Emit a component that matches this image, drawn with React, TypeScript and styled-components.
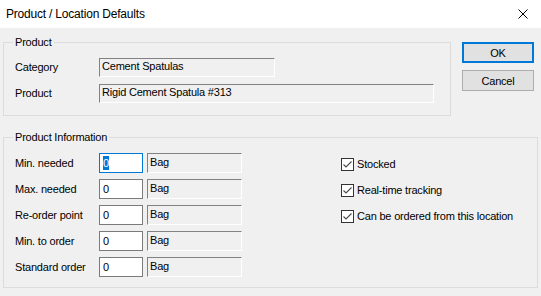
import React from "react";
import styled, { createGlobalStyle } from "styled-components";

const GlobalStyle = createGlobalStyle`
  html, body {
    margin: 0;
    padding: 0;
    background: #f0f0f0;
  }
  body {
    font-family: "Liberation Sans", Arial, sans-serif;
    font-size: 11px;
    letter-spacing: -0.2px;
    color: #000;
  }
`;

const infoRows = [
  { label: "Min. needed", value: "0", unit: "Bag", focused: true },
  { label: "Max. needed", value: "0", unit: "Bag" },
  { label: "Re-order point", value: "0", unit: "Bag" },
  { label: "Min. to order", value: "0", unit: "Bag" },
  { label: "Standard order", value: "0", unit: "Bag" },
];

const options = ["Stocked", "Real-time tracking", "Can be ordered from this location"];

const CheckMark = () => (
  <svg width="11" height="11" viewBox="0 0 11 11">
    <polyline points="1.5,5.5 4,8 9.5,2.5" fill="none" stroke="#4a4a4a" strokeWidth="1.1" />
  </svg>
);

const App: React.FC = () => {
  return (
    <Window>
      <GlobalStyle />
      <TitleBar>
        <Title>Product / Location Defaults</Title>
        <CloseButton>
          <svg width="10" height="10" viewBox="0 0 10 10">
            <path d="M0.5 0.5 L9.5 9.5 M9.5 0.5 L0.5 9.5" stroke="#000" strokeWidth="1" />
          </svg>
        </CloseButton>
      </TitleBar>

      <Body>
        <TopRow>
          <Group $width={448}>
            <Legend>Product</Legend>
            <FieldRows>
              <FieldRow>
                <FieldLabel>Category</FieldLabel>
                <StaticField $width={176}>Cement Spatulas</StaticField>
              </FieldRow>
              <FieldRow>
                <FieldLabel>Product</FieldLabel>
                <StaticField $width={335}>Rigid Cement Spatula #313</StaticField>
              </FieldRow>
            </FieldRows>
          </Group>

          <Buttons>
            <Button $primary>OK</Button>
            <Button>Cancel</Button>
          </Buttons>
        </TopRow>

        <InfoGroup>
          <Legend>Product Information</Legend>
          <InfoContent>
            <InfoGrid>
              {infoRows.map((row) => (
                <React.Fragment key={row.label}>
                  <FieldLabel>{row.label}</FieldLabel>
                  <TextBox $focused={row.focused}>
                    {row.focused ? <Selected>{row.value}</Selected> : row.value}
                  </TextBox>
                  <UnitField $width={95}>{row.unit}</UnitField>
                </React.Fragment>
              ))}
            </InfoGrid>

            <Options>
              {options.map((text) => (
                <OptionRow key={text}>
                  <CheckBox>
                    <CheckMark />
                  </CheckBox>
                  {text}
                </OptionRow>
              ))}
            </Options>
          </InfoContent>
        </InfoGroup>
      </Body>
    </Window>
  );
};

const Window = styled.div`
  width: 541px;
  height: 296px;
  overflow: hidden;
  background: #f0f0f0;
`;

const TitleBar = styled.div`
  height: 28px;
  background: #fff;
  display: flex;
  align-items: center;
  justify-content: space-between;
  padding-left: 6px;
  box-sizing: border-box;
`;

const Title = styled.span`
  font-size: 12px;
  margin-top: -1px;
`;

const CloseButton = styled.div`
  width: 46px;
  height: 28px;
  display: flex;
  align-items: center;
  justify-content: center;
  margin-right: -5px;
  margin-top: -1px;
`;

const Body = styled.div`
  padding: 7px 4px 0 3px;
`;

const TopRow = styled.div`
  display: flex;
  align-items: flex-start;
`;

const Group = styled.fieldset<{ $width?: number }>`
  margin: 0;
  padding: 9px 0 12px 11px;
  border: 1px solid #dcdcdc;
  width: ${(p) => (p.$width ? `${p.$width}px` : "auto")};
  box-sizing: border-box;
  min-width: 0;
`;

const InfoGroup = styled(Group)`
  margin-top: 14px;
  width: 535px;
  height: 158px;
  padding-top: 9px;
`;

const Legend = styled.legend`
  padding: 0 2px;
  margin-left: -2px;
  line-height: 14px;
`;

const FieldRows = styled.div`
  display: flex;
  flex-direction: column;
  gap: 7px;
`;

const FieldRow = styled.div`
  display: flex;
  align-items: center;
`;

const FieldLabel = styled.div`
  width: 84px;
  line-height: 19px;
`;

const StaticField = styled.div<{ $width: number }>`
  width: ${(p) => p.$width}px;
  height: 19px;
  box-sizing: border-box;
  border-top: 1px solid #828282;
  border-left: 1px solid #828282;
  border-right: 1px solid #fff;
  border-bottom: 1px solid #fff;
  padding-left: 2px;
  line-height: 15px;
  white-space: nowrap;
`;

const UnitField = styled(StaticField)`
  height: 20px;
  line-height: 16px;
`;

const Buttons = styled.div`
  display: flex;
  flex-direction: column;
  gap: 7px;
  margin-left: 11px;
  margin-top: 7px;
`;

const Button = styled.div<{ $primary?: boolean }>`
  width: 72px;
  height: 21px;
  box-sizing: border-box;
  background: #e1e1e1;
  border: ${(p) => (p.$primary ? "2px solid #0078d7" : "1px solid #adadad")};
  display: flex;
  align-items: center;
  justify-content: center;
`;

const InfoContent = styled.div`
  display: flex;
  align-items: flex-start;
`;

const InfoGrid = styled.div`
  display: grid;
  grid-template-columns: 84px 48px 95px;
  row-gap: 6px;
  align-items: center;
`;

const TextBox = styled.div<{ $focused?: boolean }>`
  width: 44px;
  height: 20px;
  box-sizing: border-box;
  background: #fff;
  border: 1px solid ${(p) => (p.$focused ? "#0078d7" : "#7a7a7a")};
  padding-left: 3px;
  line-height: 18px;
`;

const Selected = styled.span`
  background: #0078d7;
  color: #fff;
  padding: 1px 0;
`;

const Options = styled.div`
  display: flex;
  flex-direction: column;
  gap: 6px;
  margin-left: 99px;
  margin-top: 1px;
`;

const OptionRow = styled.div`
  display: flex;
  align-items: center;
  height: 20px;
  gap: 3px;
`;

const CheckBox = styled.div`
  width: 13px;
  height: 13px;
  box-sizing: border-box;
  border: 1px solid #333;
  background: #fff;
  display: flex;
  align-items: center;
  justify-content: center;
`;

export default App;
